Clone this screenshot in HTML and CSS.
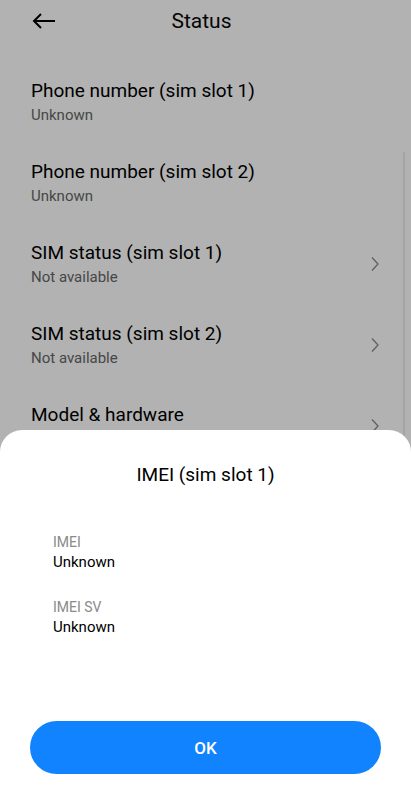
FILE: index.html
```html
<!DOCTYPE html>
<html>
  <head>
    <meta charset="UTF-8" />
    <title>Status</title>
    <link rel="stylesheet" href="styles.css">
  </head>
  <body>
    <div class="screen">

      <!-- Top bar -->
      <div class="top-bar">
        <svg class="back-icon" width="24" height="16" viewBox="0 0 24 16">
          <path d="M23 8H2M9 1L2 8l7 7" fill="none" stroke="#000" stroke-width="2" />
        </svg>
        <div class="top-title">Status</div>
      </div>

      <!-- Status list -->
      <div class="list">
        <div class="list-item">
          <div class="item-text">
            <div class="item-title">Phone number (sim slot 1)</div>
            <div class="item-sub">Unknown</div>
          </div>
        </div>
        <div class="list-item">
          <div class="item-text">
            <div class="item-title">Phone number (sim slot 2)</div>
            <div class="item-sub">Unknown</div>
          </div>
        </div>
        <div class="list-item">
          <div class="item-text">
            <div class="item-title">SIM status (sim slot 1)</div>
            <div class="item-sub">Not available</div>
          </div>
          <svg class="chevron" width="10" height="16" viewBox="0 0 10 16">
            <path d="M2 1.5l6 6.5-6 6.5" fill="none" stroke="#8a8a8a" stroke-width="1.3" />
          </svg>
        </div>
        <div class="list-item">
          <div class="item-text">
            <div class="item-title">SIM status (sim slot 2)</div>
            <div class="item-sub">Not available</div>
          </div>
          <svg class="chevron" width="10" height="16" viewBox="0 0 10 16">
            <path d="M2 1.5l6 6.5-6 6.5" fill="none" stroke="#8a8a8a" stroke-width="1.3" />
          </svg>
        </div>
        <div class="list-item">
          <div class="item-text">
            <div class="item-title">Model &amp; hardware</div>
            <div class="item-sub">&nbsp;</div>
          </div>
          <svg class="chevron" width="10" height="16" viewBox="0 0 10 16">
            <path d="M2 1.5l6 6.5-6 6.5" fill="none" stroke="#8a8a8a" stroke-width="1.3" />
          </svg>
        </div>
        <div class="list-item">
          <div class="item-text">
            <div class="item-title">IMEI (sim slot 1)</div>
            <div class="item-sub">&nbsp;</div>
          </div>
        </div>
      </div>

      <div class="scrollbar"></div>
    </div>

    <!-- Dim layer + dialog sheet -->
    <div class="dim"></div>
    <div class="sheet">
      <div class="sheet-title">IMEI (sim slot 1)</div>
      <div class="sheet-body">
        <div class="field">
          <div class="field-label">IMEI</div>
          <div class="field-value">Unknown</div>
        </div>
        <div class="field">
          <div class="field-label">IMEI SV</div>
          <div class="field-value">Unknown</div>
        </div>
      </div>
      <button class="ok-button">OK</button>
    </div>
  </body>
</html>
```

FILE: styles.css
```css
body {
  margin: 0;
  font-family: Roboto, "Noto Sans", sans-serif;
  background: #fff;
  color: #000;
  overflow: hidden;
  height: 800px;
}
.screen {
  position: relative;
  height: 800px;
}

/* Top bar */
.top-bar {
  height: 42px;
  display: flex;
  align-items: center;
  position: relative;
}
.back-icon {
  margin-left: 32px;
}
.top-title {
  position: absolute;
  left: 0;
  right: 8px;
  text-align: center;
  font-size: 21px;
  color: #0a0a0a;
  pointer-events: none;
}

/* List */
.list {
  padding-top: 19px;
}
.list-item {
  display: flex;
  align-items: center;
  padding: 0 31px;
  height: 81px;
}
.item-text {
  flex: 1;
}
.item-title {
  font-size: 19px;
  line-height: 24px;
  color: #000;
}
.item-sub {
  font-size: 15px;
  line-height: 20px;
  color: #666;
  margin-top: 2px;
}

.scrollbar {
  position: absolute;
  right: 6px;
  top: 152px;
  width: 2px;
  height: 320px;
  background: #ececec;
}

/* Dim layer over the page */
.dim {
  position: fixed;
  inset: 0;
  background: rgba(0, 0, 0, 0.3);
}

/* Bottom sheet dialog */
.sheet {
  position: fixed;
  left: 0;
  right: 0;
  bottom: 0;
  height: 370px;
  background: #fff;
  border-radius: 22px 22px 0 0;
  display: flex;
  flex-direction: column;
  padding: 0 30px 26px;
  box-sizing: border-box;
}
.sheet-title {
  text-align: center;
  font-size: 19px;
  color: #000;
  margin-top: 33px;
  line-height: 24px;
}
.sheet-body {
  flex: 1;
  padding: 45px 23px 0;
}
.field {
  margin-bottom: 25px;
}
.field-label {
  font-size: 14px;
  line-height: 20px;
  color: #8a8a8a;
}
.field-value {
  font-size: 15px;
  line-height: 20px;
  color: #000;
}
.ok-button {
  height: 53px;
  width: 100%;
  border: none;
  border-radius: 27px;
  background: #1283fe;
  color: #fff;
  font-family: Roboto, "Noto Sans", sans-serif;
  font-size: 17px;
  font-weight: 500;
}
```
